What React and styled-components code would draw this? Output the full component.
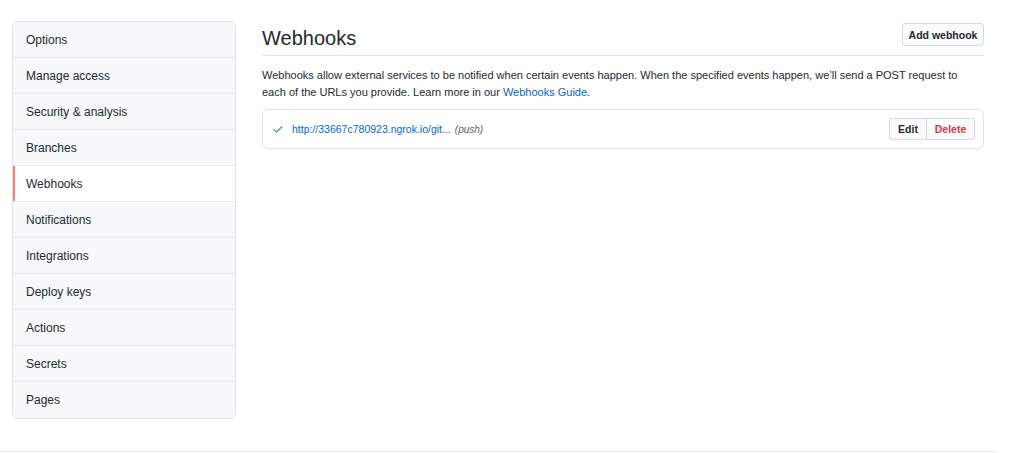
import React from "react";
import styled, { createGlobalStyle } from "styled-components";

const GlobalStyle = createGlobalStyle`
  body {
    margin: 0;
    background: #ffffff;
    font-family: "Liberation Sans", Arial, sans-serif;
    color: #24292e;
  }
  * { box-sizing: border-box; }
`;

const Page = styled.div`
  width: 997px;
  padding-top: 21px;
`;

const Layout = styled.div`
  display: flex;
  gap: 26px;
  padding: 0 13px 0 12px;
`;

const Menu = styled.nav`
  width: 224px;
  flex-shrink: 0;
  border: 1px solid #e1e4e8;
  border-radius: 6px;
  background: #f6f8fa;
  overflow: hidden;
`;

const MenuItem = styled.a`
  position: relative;
  display: flex;
  align-items: center;
  height: 36px;
  padding: 0 13px;
  font-size: 12px;
  color: #24292e;
  text-decoration: none;
  border-bottom: 1px solid #eaecef;
  background: ${({ $selected }) => ($selected ? "#ffffff" : "transparent")};

  &:last-child {
    border-bottom: none;
  }

  &::before {
    content: "";
    display: ${({ $selected }) => ($selected ? "block" : "none")};
    position: absolute;
    left: 0;
    top: 0;
    bottom: 0;
    width: 2px;
    background: #f9826c;
  }
`;

const Main = styled.main`
  flex: 1;
  min-width: 0;
`;

const Subhead = styled.div`
  display: flex;
  align-items: center;
  justify-content: space-between;
  height: 35px;
  border-bottom: 1px solid #e1e4e8;
`;

const Heading = styled.h2`
  margin: 0;
  font-size: 20px;
  font-weight: 400;
  color: #24292e;
`;

const Button = styled.button`
  height: 23px;
  padding: 0 8px;
  font-family: inherit;
  font-size: 10.5px;
  font-weight: 700;
  color: ${({ $danger }) => ($danger ? "#d73a49" : "#24292e")};
  background: #fafbfc;
  border: 1px solid rgba(27, 31, 35, 0.15);
  border-radius: 4px;
  cursor: pointer;
`;

const HeadButton = styled(Button)`
  align-self: flex-start;
  margin-top: 2px;
  width: 82px;
  padding: 0;
`;

const Intro = styled.p`
  margin: 11px 0 0;
  font-size: 11px;
  line-height: 17px;
  color: #24292e;
  white-space: nowrap;
`;

const Link = styled.a`
  color: #0366d6;
  text-decoration: none;
`;

const HookList = styled.div`
  margin-top: 8px;
  border: 1px solid #e1e4e8;
  border-radius: 6px;
`;

const HookRow = styled.div`
  display: flex;
  align-items: center;
  height: 38px;
  padding: 0 8px 0 9px;
`;

const HookUrl = styled.a`
  margin-left: 8px;
  font-size: 10.5px;
  color: #0366d6;
  text-decoration: none;
`;

const Event = styled.em`
  margin-left: 4px;
  font-size: 10px;
  color: #586069;
`;

const ButtonGroup = styled.div`
  display: flex;
  margin-left: auto;

  & > button {
    height: 22px;
    padding: 0;
  }
  & > button:first-child {
    border-radius: 4px 0 0 4px;
    width: 38px;
  }
  & > button:last-child {
    border-radius: 0 4px 4px 0;
    border-left: none;
    width: 48px;
  }
`;

const Footer = styled.footer`
  margin-top: 32px;
  border-top: 1px solid #eaecef;
  height: 2px;
`;

const CheckIcon = () => (
  <svg width="12" height="12" viewBox="0 0 16 16" fill="#28a745">
    <path d="M13.78 4.22a.75.75 0 010 1.06l-7.25 7.25a.75.75 0 01-1.06 0L2.22 9.28a.75.75 0 011.06-1.06L6 10.94l6.72-6.72a.75.75 0 011.06 0z" />
  </svg>
);

const menu = [
  "Options",
  "Manage access",
  "Security & analysis",
  "Branches",
  "Webhooks",
  "Notifications",
  "Integrations",
  "Deploy keys",
  "Actions",
  "Secrets",
  "Pages",
];

const App = () => (
  <>
    <GlobalStyle />
    <Page>
      <Layout>
        <Menu>
          {menu.map((item) => (
            <MenuItem key={item} href="#" $selected={item === "Webhooks"}>
              {item}
            </MenuItem>
          ))}
        </Menu>
        <Main>
          <Subhead>
            <Heading>Webhooks</Heading>
            <HeadButton>Add webhook</HeadButton>
          </Subhead>
          <Intro>
            Webhooks allow external services to be notified when certain events happen. When the
            specified events happen, we’ll send a POST request to
            <br />
            each of the URLs you provide. Learn more in our <Link href="#">Webhooks Guide</Link>.
          </Intro>
          <HookList>
            <HookRow>
              <CheckIcon />
              <HookUrl href="#">http://33667c780923.ngrok.io/git...</HookUrl>
              <Event>(push)</Event>
              <ButtonGroup>
                <Button>Edit</Button>
                <Button $danger>Delete</Button>
              </ButtonGroup>
            </HookRow>
          </HookList>
        </Main>
      </Layout>
      <Footer />
    </Page>
  </>
);

export default App;
